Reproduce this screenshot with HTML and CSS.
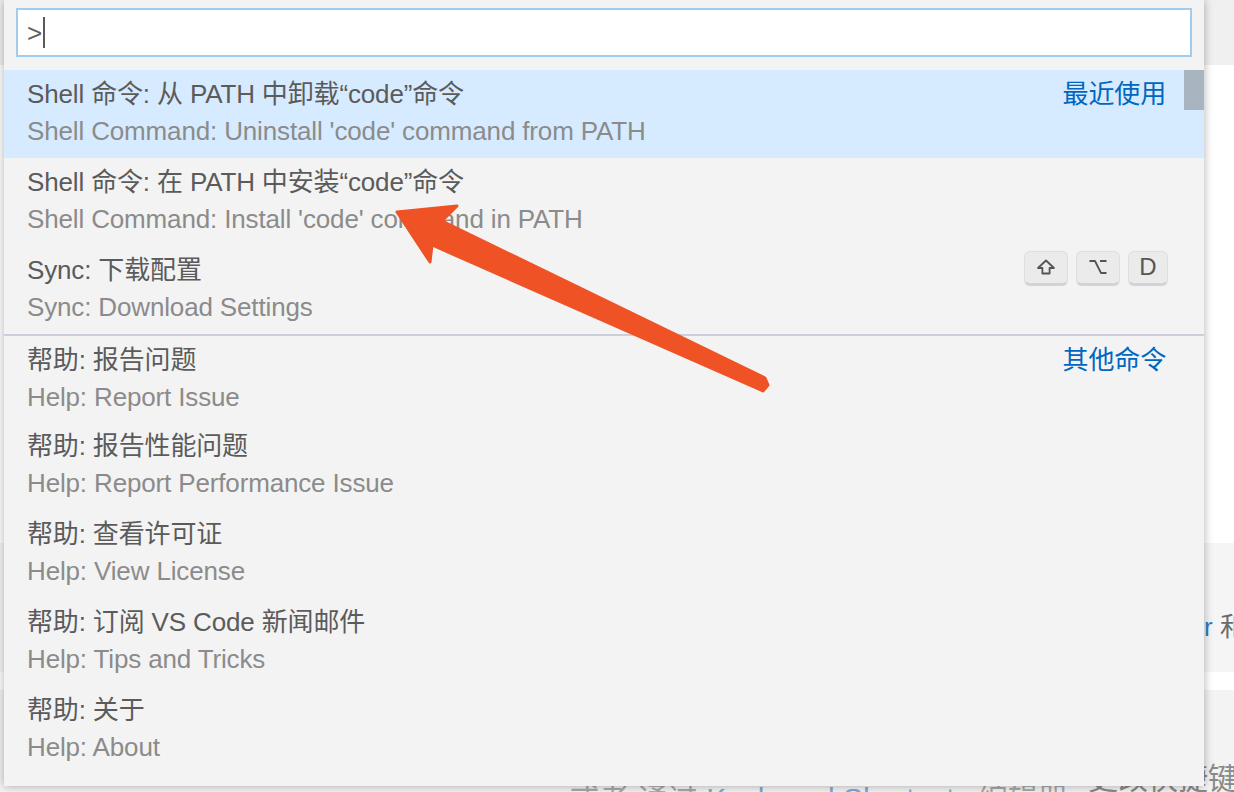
FILE: index.html
```html
<!DOCTYPE html>
<html lang="zh">
<head>
<meta charset="utf-8">
<title>Command Palette</title>
<link rel="stylesheet" href="styles.css">
</head>
<body>
<div class="backdrop">
  <div class="bd-top"></div>
  <div class="bd-white"></div>
  <div class="bd-band"><div class="bd-line">在 Visual Studio Code 中使用 Edito<span class="bd-link">r</span> 和</div></div>
  <div class="bd-gap"></div>
  <div class="bd-band2">
    <span class="bd-low">或者 通过 <span class="bd-link">Keyboard Shortcuts</span> 编辑器</span>
    <span class="bd-line2">更改快捷键</span>
  </div>
</div>

<div class="quick-open">
  <div class="input-wrap">
    <div class="input"><span class="input-text">&gt;</span><span class="caret"></span></div>
  </div>
  <div class="list">
    <div class="scrollbar"></div>
    <div class="item selected">
      <div class="label-row"><span class="label">Shell 命令: 从 PATH 中卸载“code”命令</span><span class="group">最近使用</span></div>
      <div class="desc">Shell Command: Uninstall 'code' command from PATH</div>
    </div>
    <div class="item">
      <div class="label-row"><span class="label">Shell 命令: 在 PATH 中安装“code”命令</span></div>
      <div class="desc">Shell Command: Install 'code' command in PATH</div>
    </div>
    <div class="item">
      <div class="label-row"><span class="label">Sync: 下载配置</span>
        <span class="keys">
          <span class="key"><svg width="20" height="16" viewBox="0 0 20 16"><path d="M10 1.5 L18 9 L13.6 9 L13.6 14.5 L6.4 14.5 L6.4 9 L2 9 Z" fill="none" stroke="#555" stroke-width="1.8" stroke-linejoin="round"/></svg></span>
          <span class="key"><svg width="20" height="16" viewBox="0 0 20 16"><path d="M1.5 2 H7 L13 14 H18.5 M12 2 H18.5" fill="none" stroke="#555" stroke-width="1.8" stroke-linejoin="round"/></svg></span>
          <span class="key key-d">D</span>
        </span>
      </div>
      <div class="desc">Sync: Download Settings</div>
    </div>
    <div class="item separator">
      <div class="label-row"><span class="label">帮助: 报告问题</span><span class="group">其他命令</span></div>
      <div class="desc">Help: Report Issue</div>
    </div>
    <div class="item">
      <div class="label-row"><span class="label">帮助: 报告性能问题</span></div>
      <div class="desc">Help: Report Performance Issue</div>
    </div>
    <div class="item">
      <div class="label-row"><span class="label">帮助: 查看许可证</span></div>
      <div class="desc">Help: View License</div>
    </div>
    <div class="item">
      <div class="label-row"><span class="label">帮助: 订阅 VS Code 新闻邮件</span></div>
      <div class="desc">Help: Tips and Tricks</div>
    </div>
    <div class="item">
      <div class="label-row"><span class="label">帮助: 关于</span></div>
      <div class="desc">Help: About</div>
    </div>
  </div>
</div>

<svg class="annotation" width="1234" height="792" viewBox="0 0 1234 792">
  <polygon points="397,212 457,206 442,221 765,378 768,385 763,391 432,245 430,262" fill="#ef5225" stroke="#ef5225" stroke-width="3" stroke-linejoin="round"/>
</svg>
</body>
</html>
```

FILE: styles.css
```css
html, body {
  margin: 0;
  padding: 0;
}
body {
  width: 1234px;
  height: 792px;
  overflow: hidden;
  position: relative;
  background: #ffffff;
  font-family: "Liberation Sans", "Noto Sans CJK SC", sans-serif;
}

/* editor behind the palette */
.backdrop {
  display: flex;
  flex-direction: column;
  height: 792px;
}
.bd-top {
  height: 65px;
  flex: none;
  background: #f0f0f0;
}
.bd-white {
  height: 478px;
  flex: none;
  background: #ffffff;
}
.bd-band {
  height: 129px;
  flex: none;
  background: #f5f5f5;
  box-sizing: border-box;
  padding-top: 68px;
}
.bd-line {
  font-size: 26px;
  line-height: 32px;
  color: #6a6a6a;
  white-space: nowrap;
  text-align: right;
  margin-right: -12px;
}
.bd-gap {
  height: 18px;
  flex: none;
  background: #ffffff;
}
.bd-band2 {
  height: 102px;
  flex: none;
  background: #f3f3f3;
  box-sizing: border-box;
  padding-top: 72px;
  display: flex;
  justify-content: flex-end;
  align-items: flex-start;
  gap: 20px;
  margin-right: -4px;
  white-space: nowrap;
  overflow: hidden;
}
.bd-low {
  font-size: 30px;
  line-height: 34px;
  margin-top: 20px;
  color: #a8a8a8;
}
.bd-line2 {
  font-size: 30px;
  line-height: 34px;
  color: #8a8a8a;
}
.bd-link {
  color: #7aaad6;
}
.bd-line .bd-link {
  color: #2d7ec4;
}

/* quick open widget */
.quick-open {
  position: absolute;
  left: 4px;
  top: 0;
  width: 1200px;
  height: 786px;
  background: #f3f3f3;
  box-shadow: 0 0 9px rgba(0, 0, 0, 0.32);
  letter-spacing: -0.15px;
}
.input-wrap {
  padding: 8px 12px 13px 12px;
}
.input {
  height: 49px;
  box-sizing: border-box;
  background: #ffffff;
  border: 2px solid #a2cced;
  display: flex;
  align-items: center;
  padding-left: 9px;
  font-size: 26px;
  color: #5f5f5f;
}
.input-text {
  line-height: 30px;
}
.caret {
  display: inline-block;
  width: 2px;
  height: 31px;
  background: #5a5a5a;
  margin-left: 1px;
}

.list {
  position: relative;
}
.scrollbar {
  position: absolute;
  right: 0;
  top: 0;
  width: 20px;
  height: 40px;
  background: rgba(100, 100, 100, 0.4);
}
.item {
  height: 88px;
  box-sizing: border-box;
  padding: 0 38px 0 23px;
  font-size: 26px;
}
.item.selected {
  background: #d6ebff;
}
.item.separator {
  border-top: 2px solid #cccedb;
}
.label-row {
  height: 42px;
  display: flex;
  align-items: center;
  justify-content: space-between;
}
.label {
  color: #5b5b5b;
  white-space: nowrap;
}
.group {
  color: #0066bf;
  white-space: nowrap;
}
.desc {
  line-height: 38px;
  color: #8b8b8b;
  white-space: nowrap;
}
.keys {
  display: flex;
  gap: 8px;
  margin-right: -2px;
  margin-top: 2px;
}
.key {
  width: 44px;
  height: 35px;
  box-sizing: border-box;
  border-radius: 6px;
  background: #ebebeb;
  border: 1px solid #dedede;
  border-bottom: 3px solid #d3d3d3;
  display: flex;
  align-items: center;
  justify-content: center;
  color: #555;
  font-size: 24px;
  letter-spacing: 0;
}
.key-d {
  width: 40px;
}

.annotation {
  position: absolute;
  left: 0;
  top: 0;
  pointer-events: none;
}
```
